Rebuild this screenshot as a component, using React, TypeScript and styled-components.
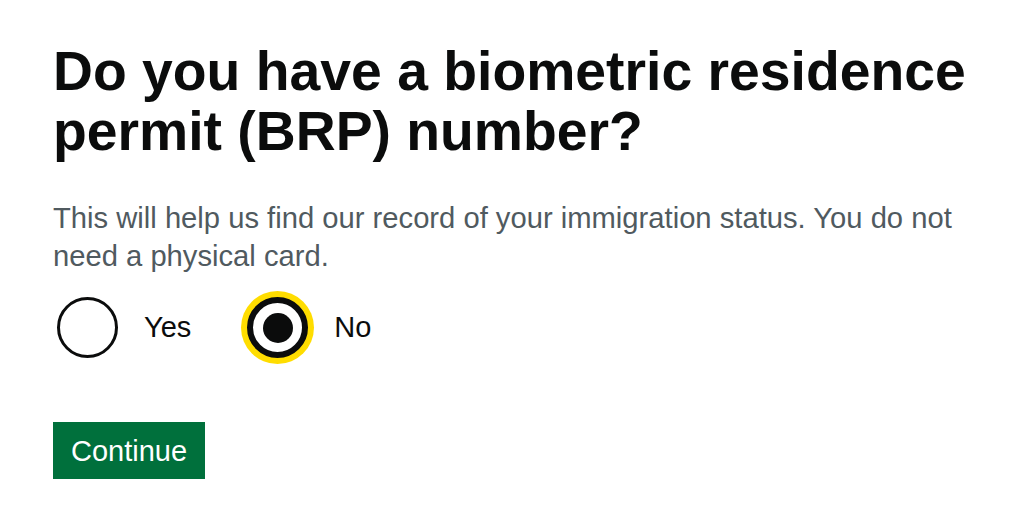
import React from "react";
import styled, { createGlobalStyle } from "styled-components";

const GlobalStyle = createGlobalStyle`
  html, body {
    margin: 0;
    padding: 0;
    background: #ffffff;
  }
  body {
    font-family: "Liberation Sans", Arial, sans-serif;
    color: #0b0c0c;
  }
`;

const Page = styled.main`
  padding: 41px 20px 0 53px;
  max-width: 1024px;
  box-sizing: border-box;
`;

const Fieldset = styled.fieldset`
  border: 0;
  margin: 0;
  padding: 0;
  min-width: 0;
`;

const Heading = styled.h1`
  margin: 0 0 39px 0;
  font-size: 55.3px;
  line-height: 60px;
  font-weight: 700;
  color: #0b0c0c;
`;

const Hint = styled.div`
  margin: 0 0 22px 0;
  font-size: 29.2px;
  line-height: 37.5px;
  color: #505a5f;
  max-width: 945px;
`;

const Radios = styled.div`
  display: flex;
  align-items: center;
  gap: 56px;
  padding-left: 4px;
`;

const RadioItem = styled.label`
  display: flex;
  align-items: center;
  gap: 26px;
  cursor: pointer;
`;

const Circle = styled.span<{ $checked?: boolean; $focused?: boolean }>`
  display: flex;
  align-items: center;
  justify-content: center;
  width: 61px;
  height: 61px;
  box-sizing: border-box;
  border-radius: 50%;
  background: #ffffff;
  border: ${(p) => (p.$focused ? "6.5px" : "3px")} solid #0b0c0c;
  box-shadow: ${(p) => (p.$focused ? "0 0 0 6px #ffdd00" : "none")};
  flex: none;
`;

const Dot = styled.span`
  width: 30px;
  height: 30px;
  border-radius: 50%;
  background: #0b0c0c;
`;

const LabelText = styled.span`
  font-size: 29px;
  line-height: 37.5px;
  color: #0b0c0c;
`;

const Button = styled.button`
  margin-top: 64px;
  display: inline-block;
  font-family: "Liberation Sans", Arial, sans-serif;
  font-size: 29px;
  line-height: 28.5px;
  font-weight: 400;
  color: #ffffff;
  background: #00703c;
  border: 3px solid transparent;
  border-radius: 0;
  box-shadow: 0 3px 0 #002d18;
  padding: 12px 15px 10.5px;
  cursor: pointer;
`;

export default function App() {
  return (
    <>
      <GlobalStyle />
      <Page>
        <Fieldset>
          <Heading>Do you have a biometric residence permit (BRP) number?</Heading>
          <Hint>
            This will help us find our record of your immigration status. You do not need a physical card.
          </Hint>
          <Radios>
            <RadioItem>
              <Circle />
              <LabelText>Yes</LabelText>
            </RadioItem>
            <RadioItem>
              <Circle $checked $focused>
                <Dot />
              </Circle>
              <LabelText>No</LabelText>
            </RadioItem>
          </Radios>
        </Fieldset>
        <Button type="button">Continue</Button>
      </Page>
    </>
  );
}
